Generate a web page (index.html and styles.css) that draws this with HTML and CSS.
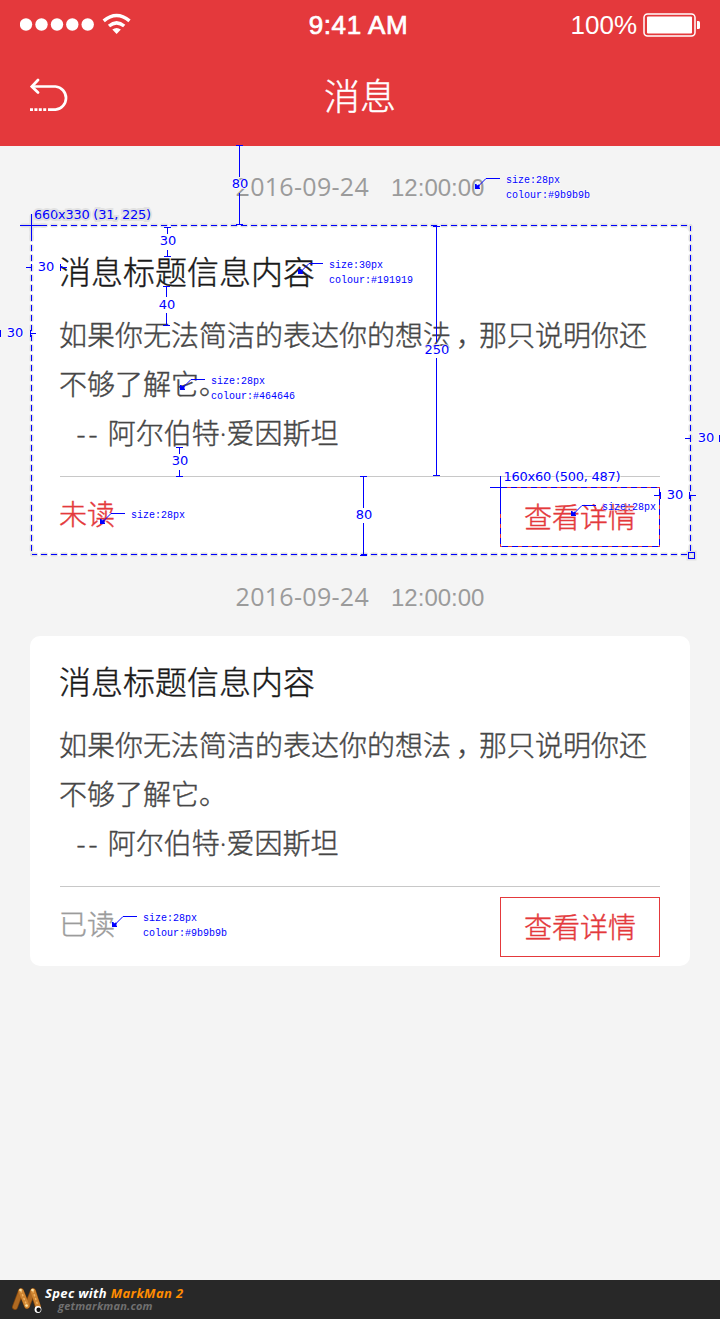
FILE: index.html
```html
<!DOCTYPE html>
<html lang="zh-CN">
<head>
<meta charset="utf-8">
<title>消息</title>
<link rel="stylesheet" href="styles.css">
</head>
<body>
<header class="header">
  <div class="status">
    <svg class="signal" width="114" height="24" viewBox="0 0 114 24" fill="#fff">
      <circle cx="6" cy="11.500" r="6.200"/><circle cx="21.500" cy="11.500" r="6.200"/><circle cx="37" cy="11.500" r="6.200"/><circle cx="52.300" cy="11.500" r="6.200"/><circle cx="67.700" cy="11.500" r="6.200"/>
      <g fill="none" stroke="#fff" stroke-width="3.500">
        <path d="M83.700 7.800Q96.600-2.800 109.500 7.800"/><path d="M89 13Q96.600 6.800 104.200 13"/>
      </g>
      <path d="M92.300 16.500Q96.600 13.300 100.900 16.500L96.600 20.900Z"/>
    </svg>
    <span class="clock">9:41 AM</span>
    <span class="power">100%
      <svg width="57" height="24" viewBox="0 0 57 24" fill="none">
        <rect x="1" y="1" width="51" height="22" rx="3.500" stroke="#fff" stroke-width="1.500"/>
        <rect x="4" y="3.500" width="45" height="17" rx="1" fill="#fff"/>
        <path d="M54 8h1.500q1.500 0 1.500 1.500v5q0 1.500-1.500 1.500H54z" fill="#fff"/>
      </svg>
    </span>
  </div>
  <div class="nav">
    <svg class="back" width="40" height="34" viewBox="0 0 40 34" fill="none" stroke="#fff" stroke-width="2.700">
      <path d="M8 2L1.800 8.500L8 14.500" stroke-linecap="round"/>
      <path d="M2 8.500H25.500A11.600 11.600 0 0 1 25.500 31.600H18"/>
      <path d="M0 31.600H17" stroke-dasharray="3 1.400"/>
    </svg>
    <h1 class="title">消息</h1>
  </div>
</header>

<main class="messages">
  <div class="stamp"><span class="date">2016-09-24</span><span class="time">12:00:00</span></div>
  <article class="card">
    <h2 class="card-title">消息标题信息内容</h2>
    <div class="card-body">
      <p>如果你无法简洁的表达你的想法<span class="comma">，</span>那只说明你还</p>
      <p>不够了解它。</p>
      <p class="author"><span class="dashes">--</span> 阿尔伯特·爱因斯坦</p>
    </div>
    <div class="card-foot">
      <span class="state unread">未读</span>
      <a class="detail">查看详情</a>
    </div>
  </article>

  <div class="stamp"><span class="date">2016-09-24</span><span class="time">12:00:00</span></div>
  <article class="card">
    <h2 class="card-title">消息标题信息内容</h2>
    <div class="card-body">
      <p>如果你无法简洁的表达你的想法<span class="comma">，</span>那只说明你还</p>
      <p>不够了解它。</p>
      <p class="author"><span class="dashes">--</span> 阿尔伯特·爱因斯坦</p>
    </div>
    <div class="card-foot">
      <span class="state">已读</span>
      <a class="detail">查看详情</a>
    </div>
  </article>
</main>

<footer class="credit">
  <svg width="32" height="30" viewBox="0 0 32 30" fill="none" stroke-linecap="round">
    <path d="M3 23L9 7L15 22L21 7L26 23" stroke="#7c430d" stroke-width="6" stroke-linejoin="round"/>
    <path d="M3 23L9 7M15 22L21 7" stroke="#b06a22" stroke-width="4.500"/>
    <path d="M9 7L15 22M21 7L26 22" stroke="#cf8532" stroke-width="5"/>
    <path d="M9 7L15 22M21 7L26 22" stroke="#f0b463" stroke-width="1.500" stroke-dasharray="1 3"/>
    <circle cx="8.500" cy="6" r="1.300" fill="#ffe6a8"/><circle cx="20.500" cy="6" r="1.300" fill="#ffe6a8"/><circle cx="14.500" cy="21.500" r="1.300" fill="#ffe6a8"/>
    <circle cx="26" cy="25.500" r="3.400" fill="#fff"/><circle cx="26.600" cy="25.800" r="2.200" fill="#111"/>
  </svg>
  <div class="credit-text">
    <div class="spec">Spec with <span class="brand">MarkMan 2</span></div>
    <div class="site">getmarkman.com</div>
  </div>
</footer>

<svg class="marks" width="720" height="1319" viewBox="0 0 720 1319">
  <defs>
    <g id="callout">
      <path d="M25 .5H11L4 7.500" fill="none" stroke="#00f"/>
      <path d="M0 6V11H5V9.500H4L5 7.500L3.500 6.500L2 7.500L1.500 6Z" fill="#00f"/>
    </g>
  </defs>

  <!-- Selected areas -->
  <g fill="none">
    <path class="halo" d="M31.500 225.500H690.500M31.500 554.500H690.500M31.500 225.500V554.500M690.500 225.500V554.500" stroke-dasharray="4 6" stroke-dashoffset="-.5"/>
    <path class="halo" d="M22 225.500H45M31.500 216V239M688.500 552.500h6v6h-6z"/>
    <path class="rule" d="M31.500 225.500H690.500M31.500 554.500H690.500" stroke-dasharray="6 4" stroke-dashoffset=".5"/>
    <path class="rule" d="M31.500 225.500V554.500M690.500 225.500V554.500" stroke-dasharray="6 4" stroke-dashoffset=".5"/>
    <path class="rule" d="M20 225.500H46M31.500 214V240M490 487.500H501M500.500 476V513"/>
    <path class="rule" d="M500.500 487.500H659.500V546.500H500.500Z" stroke-dasharray="6 4"/>
    <rect class="rule" x="688.500" y="552.500" width="6" height="6"/>
  </g>

  <!-- Vertical distances -->
  <g class="rule">
    <path d="M236 145.500H243M239.500 145V177M239.500 193V225M236 224.500H243"/>
    <path d="M164 227.500H171M167.500 227V234M167.500 250V256M164 256.500H171"/>
    <path d="M163 286.500H170M166.500 286V297M166.500 313V325M163 325.500H170"/>
    <path d="M433 226.500H440M436.500 226V342M436.500 358V475M433 475.500H440"/>
    <path d="M176 447.500H183M179.500 447V454M179.500 470V476M176 476.500H183"/>
    <path d="M360 476.500H367M363.500 476V508M363.500 523V555M360 555.500H367"/>
  </g>

  <!-- Horizontal distances -->
  <g class="rule">
    <path d="M26 267.500H31M31.500 264V271M60.500 264V271M61 267.500H67"/>
    <path d="M.5 330V337M30.500 330V337M31 333.500H36"/>
    <path d="M685 438.500H691M690.500 435V442M719.500 435V442"/>
    <path d="M654 495.500H660M660.500 492V499M689.500 492V499M690 495.500H696"/>
  </g>

  <g class="size">
    <text x="34" y="219" class="wide" textLength="117">660x330 (31, 225)</text>
    <text x="503.500" y="481" textLength="117">160x60 (500, 487)</text>
  </g>
  <g class="size mid">
    <text x="240" y="188">80</text><text x="168" y="245">30</text><text x="167" y="309">40</text>
    <text x="437" y="354">250</text><text x="180" y="465">30</text><text x="364" y="519">80</text>
    <text x="46" y="271">30</text><text x="15" y="337">30</text><text x="706" y="442">30</text><text x="675" y="499">30</text>
  </g>

  <use href="#callout" x="475" y="178"/><use href="#callout" x="298" y="263"/><use href="#callout" x="180" y="379"/>
  <use href="#callout" x="100" y="513"/><use href="#callout" x="571" y="505"/><use href="#callout" x="112" y="916"/>
  <g class="note">
    <text x="506" y="183">size:28px</text><text x="506" y="198">colour:#9b9b9b</text>
    <text x="329" y="268">size:30px</text><text x="329" y="283">colour:#191919</text>
    <text x="211" y="384">size:28px</text><text x="211" y="399">colour:#464646</text>
    <text x="131" y="518">size:28px</text><text x="602" y="510">size:28px</text>
    <text x="143" y="921">size:28px</text><text x="143" y="936">colour:#9b9b9b</text>
  </g>
</svg>
</body>
</html>
```
FILE: styles.css
```css
* { box-sizing: border-box; margin: 0; padding: 0; }
body {
  position: relative;
  display: flex;
  flex-direction: column;
  height: 1319px;
  overflow: hidden;
  background: #f4f4f4;
  font-family: "Open Sans", "Noto Sans CJK SC", sans-serif;
  font-weight: 300;
  -webkit-text-stroke-width: .4px;
}
svg { display: block; }

.header { height: 146px; background: #e4393c; color: #fff; }
.status {
  display: grid;
  grid-template-columns: 1fr auto 1fr;
  align-items: center;
  height: 49px;
  padding: 0 20px;
  font: 400 26px/48px "Liberation Sans", Arial, sans-serif;
}
.clock { padding-right: 3px; -webkit-text-stroke: .7px #fff; letter-spacing: .6px; }
.power { display: flex; justify-content: flex-end; align-items: center; gap: 6px; -webkit-text-stroke-width: 0; }
.nav {
  display: grid;
  grid-template-columns: 40px 1fr 40px;
  align-items: center;
  height: 92px;
  padding: 0 30px;
}
.title { padding-top: 4px; font-size: 36px; line-height: 88px; font-weight: 300; text-align: center; }

.messages { flex: 1; padding: 0 30px; }
.stamp {
  display: flex;
  justify-content: center;
  align-items: baseline;
  gap: 22px;
  height: 80px;
  line-height: 80px;
  color: #9b9b9b;
  -webkit-text-stroke-width: 0;
}
.date { font-size: 25px; font-weight: 400; letter-spacing: .3px; }
.time { font: 400 24px "Liberation Sans", Arial, sans-serif; }

.card {
  display: flex;
  flex-direction: column;
  height: 330px;
  padding: 0 30px 0 29px;
  border-radius: 10px;
  background: #fff;
}
.card-title {
  padding-top: 22px;
  font-size: 32px;
  line-height: 48px;
  font-weight: 300;
  color: #191919;
}
.card-body {
  height: 180px;
  padding-top: 15px;
  font-size: 28px;
  line-height: 49px;
  color: #464646;
  white-space: nowrap;
}
.comma { padding-left: 5px; margin-right: -5px; }
.author { padding-left: 17.500px; }
.dashes { letter-spacing: 3px; }
.card-foot {
  display: flex;
  justify-content: space-between;
  height: 80px;
  margin-left: 1px;
  padding-top: 10px;
  border-top: 1px solid #c8c8c8;
  font-size: 28px;
}
.state { margin-left: -1px; line-height: 54px; color: #9b9b9b; }
.state.unread { color: #e4393c; }
.detail {
  width: 160px;
  height: 60px;
  border: 1px solid #e4393c;
  color: #e4393c;
  line-height: 59px;
  text-align: center;
}

.credit {
  display: flex;
  gap: 1px;
  height: 39px;
  padding: 4px 12px;
  background: #282828;
  font-weight: 700;
  font-style: italic;
  -webkit-text-stroke-width: 0;
}
.credit-text { font-family: "Open Sans", sans-serif; white-space: nowrap; }
.spec { font-size: 13px; line-height: 19px; letter-spacing: .35px; color: #fff; }
.brand { color: #ff8c00; }
.site { padding-left: 13px; font-size: 11px; line-height: 6px; letter-spacing: .2px; color: #707070; }

.marks { position: absolute; left: 0; top: 0; }
.rule { fill: none; stroke: #00f; stroke-width: 1; shape-rendering: crispEdges; }
.halo { stroke: #e0e0e0; stroke-width: 4; stroke-linecap: round; }
.size, .note { fill: #00f; paint-order: stroke; stroke: #fff; stroke-width: 2px; stroke-opacity: .75; }
.size { font: 400 13px "DejaVu Sans", Verdana, sans-serif; }
.wide { stroke: #dcdcdc; stroke-width: 4px; }
.mid { text-anchor: middle; }
.note { font: 400 10px "Liberation Mono", monospace; stroke-width: 1px; }
```
